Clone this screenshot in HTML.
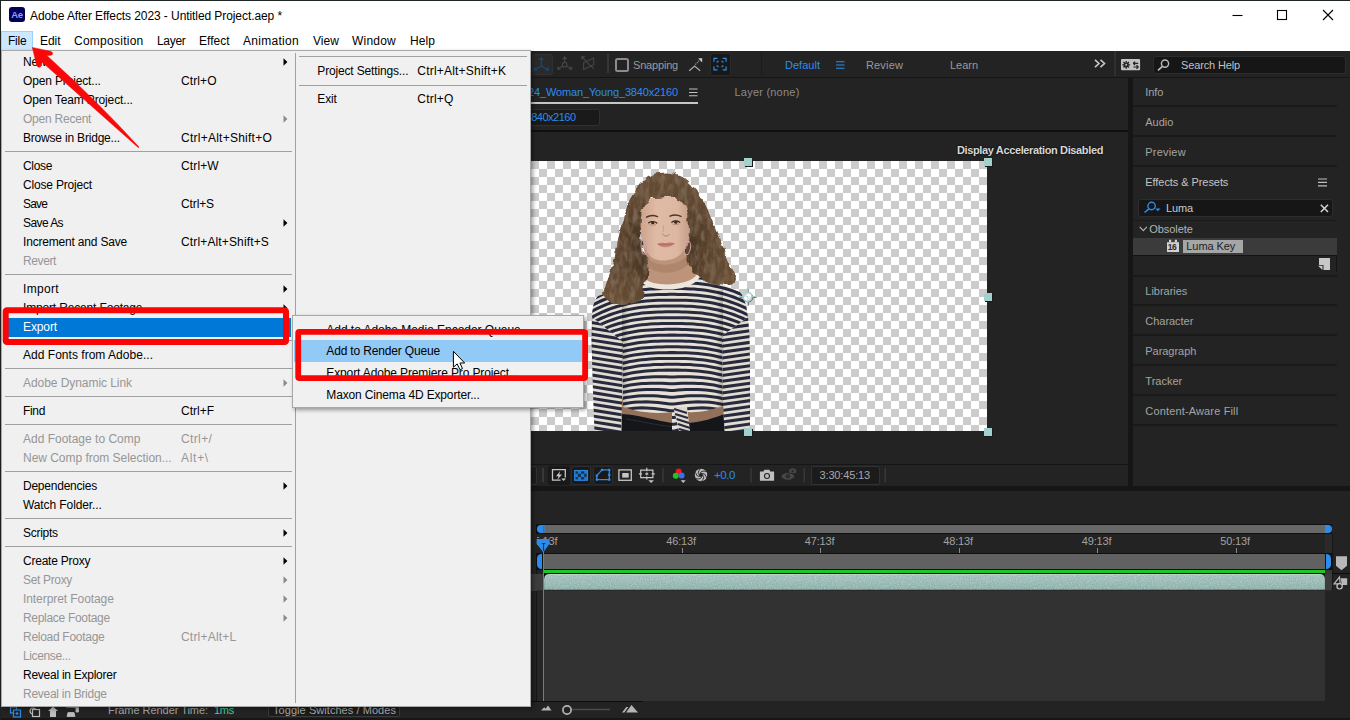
<!DOCTYPE html>
<html lang="en"><head><meta charset="utf-8"><title>Adobe After Effects 2023 - Untitled Project.aep *</title>
<style>
html,body{margin:0;padding:0;}
body{width:1350px;height:720px;overflow:hidden;position:relative;background:#232323;font-family:"Liberation Sans",sans-serif;}
.t{position:absolute;white-space:nowrap;display:block;}
.r{position:absolute;box-sizing:border-box;}
svg{position:absolute;overflow:visible;}
</style></head>
<body>
<!-- 10_app.py -->
<div class="r" style="left:0px;top:51px;width:1350px;height:669px;background:#161616;"></div>
<div class="r" style="left:0px;top:51px;width:1350px;height:25.5px;background:#232323;"></div>
<div class="r" style="left:300px;top:78px;width:827.5px;height:408px;background:#232323;"></div>
<div class="r" style="left:1132.5px;top:78px;width:217.5px;height:408px;background:#232323;"></div>
<div class="r" style="left:0px;top:491px;width:1350px;height:227px;background:#232323;"></div>
<div class="r" style="left:532.4px;top:54.4px;width:20.2px;height:20.2px;background:#2a2a2a;border-radius:2.5px;border:1px solid #313131;"></div>
<svg style="left:530px;top:52px" width="70" height="24" viewBox="0 0 70 24">
<g stroke="#1b4872" stroke-width="1.2" fill="#1b4872" stroke-linejoin="round">
<path d="M11.4 13.9V7.5M11.4 13.9L5.6 17.4M11.4 13.9L17.2 17.4" fill="none"/>
<path d="M11.4 5.1L13.6 7.7H9.2ZM4.2 18.5L4.7 15.3L7.1 18.2ZM18.6 18.5L18.1 15.3L15.7 18.2Z" stroke-width=".6"/></g>
<g stroke="#464646" stroke-width="1.1" fill="#464646" stroke-linejoin="round">
<path d="M34.7 10.2V6.6M32.8 14L28.8 16.5M36.6 14L40.6 16.5" fill="none"/><circle cx="34.7" cy="12.7" r="2.3" fill="none"/>
<path d="M34.7 4.3L36.9 6.9H32.5ZM27.4 17.6L27.9 14.5L30.3 17.3ZM42 17.6L41.5 14.5L39.1 17.3Z" stroke-width=".6"/>
<path d="M53.6 10.7L63.7 5.9V12.7L53.6 17.5Z" fill="none"/><path d="M59.2 12.4L53 5.8M59.2 12.4L63.7 16.6" fill="none"/>
<path d="M51.5 4.3L55 4.6L51.9 7.6Z" stroke-width=".6"/></g>
</svg>
<div class="r" style="left:607.2px;top:54.4px;width:1.7px;height:18.4px;background:#363636;"></div>
<div class="r" style="left:615px;top:58px;width:13.5px;height:13.5px;background:transparent;border:2px solid #8c8c8c;border-radius:2.5px;"></div>
<span class="t" style="left:633.00px;top:55.00px;height:20px;line-height:20px;font-size:11px;color:#9a9a9a;letter-spacing:-0.185px;">Snapping</span>
<svg style="left:688px;top:56px" width="18" height="18" viewBox="0 0 18 18">
<path d="M1.2 14.8L6.6 10L12.1 14.8" fill="none" stroke="#a8a8a8" stroke-width="1.3"/>
<path d="M7.3 8.6L11.2 4.7" stroke="#9a9a9a" stroke-width="1.1" stroke-dasharray="1.3 .9"/>
<path d="M10.1 2.3H14.2V6.4Z" fill="#cdcdcd"/></svg>
<div class="r" style="left:710.2px;top:53.4px;width:21px;height:22.2px;background:#181818;border-radius:3px;border:1px solid #2a2a2a;"></div>
<svg style="left:712px;top:56px" width="18" height="16" viewBox="0 0 18 16">
<g fill="none" stroke="#2d8ceb" stroke-width="1.2">
<path d="M2 5.7V2.3H5.4M10.7 2.3H14.1V5.7M14.1 10.4V13.8H10.7M5.4 13.8H2V10.4"/>
<path d="M5.2 6.9V5.3H6.8M9.3 5.3H10.9V6.9M10.9 9.1V10.7H9.3M6.8 10.7H5.2V9.1" stroke-width="1"/></g></svg>
<div class="r" style="left:761px;top:51px;width:1px;height:25px;background:#1c1c1c;"></div>
<span class="t" style="left:785.00px;top:55.00px;height:20px;line-height:20px;font-size:11px;color:#2d8ceb;letter-spacing:0.021px;">Default</span>
<svg style="left:836px;top:61px" width="9" height="8" viewBox="0 0 9 8"><path d="M0 .8H8.5M0 4H8.5M0 7.2H8.5" stroke="#2d8ceb" stroke-width="1.05"/></svg>
<span class="t" style="left:866.00px;top:55.00px;height:20px;line-height:20px;font-size:11px;color:#9a9a9a;letter-spacing:0.156px;">Review</span>
<span class="t" style="left:950.00px;top:55.00px;height:20px;line-height:20px;font-size:11px;color:#9a9a9a;letter-spacing:-0.026px;">Learn</span>
<svg style="left:1094px;top:59px" width="12" height="9" viewBox="0 0 12 9"><path d="M1 .8L5 4.5L1 8.2M6.5 .8L10.5 4.5L6.5 8.2" fill="none" stroke="#c8c8c8" stroke-width="1.6"/></svg>
<div class="r" style="left:1114.4px;top:51px;width:1.6px;height:24.8px;background:#303030;"></div>
<svg style="left:1120.9px;top:58.8px" width="20" height="12" viewBox="0 0 20 12">
<rect x="0" y="0" width="19.1" height="11.3" rx="1" fill="#c2c2c2"/>
<path d="M7.40 5.80L9.10 5.80M6.76 7.36L7.96 8.56M5.20 8.00L5.20 9.70M3.64 7.36L2.44 8.56M3.00 5.80L1.30 5.80M3.64 4.24L2.44 3.04M5.20 3.60L5.20 1.90M6.76 4.24L7.96 3.04" stroke="#232323" stroke-width="1.3"/>
<circle cx="5.2" cy="5.8" r="2.6" fill="#232323"/><circle cx="5.2" cy="5.8" r="1" fill="#c2c2c2"/>
<path d="M12.4 4.3H17.2M12.2 4.3L14.1 2.6M12.2 4.3L14.1 6M12.4 8H17.2M17.4 8L15.5 6.3M17.4 8L15.5 9.7" stroke="#232323" stroke-width="1.2" fill="none"/></svg>
<div class="r" style="left:1152.5px;top:55.5px;width:193px;height:18px;background:#161616;border-radius:3px;border:1px solid #2c2c2c;"></div>
<svg style="left:1157px;top:59px" width="14" height="12" viewBox="0 0 14 12"><circle cx="8" cy="4.6" r="3.6" fill="none" stroke="#b9b9b9" stroke-width="1.4"/><path d="M5.4 7.4L1 11.3" stroke="#b9b9b9" stroke-width="1.8"/></svg>
<span class="t" style="left:1181.00px;top:55.00px;height:20px;line-height:20px;font-size:11px;color:#c0c0c0;letter-spacing:-0.139px;">Search Help</span>
<!-- 20_comp.py -->
<span class="t" style="right:672.00px;top:81.70px;height:20px;line-height:20px;font-size:11px;color:#2d8ceb;letter-spacing:-0.150px;">Composition 24_Woman_Young_3840x2160</span>
<svg style="left:689px;top:88px" width="9" height="9" viewBox="0 0 9 9"><path d="M0 1H8.5M0 4.4H8.5M0 7.8H8.5" stroke="#c0c0c0" stroke-width="1.05"/></svg>
<div class="r" style="left:300px;top:102px;width:397.5px;height:2px;background:#c6c6c6;"></div>
<span class="t" style="left:734.50px;top:81.70px;height:20px;line-height:20px;font-size:11px;color:#8a8a8a;letter-spacing:0.220px;">Layer (none)</span>
<div class="r" style="left:300px;top:109px;width:299.5px;height:16.5px;background:#1a1a1a;border:1px solid #2f2f2f;border-radius:2px;"></div>
<span class="t" style="right:774.50px;top:107.00px;height:20px;line-height:20px;font-size:11px;color:#2d8ceb;letter-spacing:-0.500px;">24_Woman_Young_3840x2160</span>
<div class="r" style="left:300px;top:130px;width:827.5px;height:1.5px;background:#101010;"></div>
<span class="t" style="left:957.00px;top:139.50px;height:20px;line-height:20px;font-size:11px;color:#d6d6d6;letter-spacing:-0.369px;font-weight:bold;text-shadow:0 0 2px #000;">Display Acceleration Disabled</span>
<div class="r" style="left:507px;top:161px;width:480px;height:270px;background-color:#fff;background-image:conic-gradient(#ccc 0 25%,#fff 0 50%,#ccc 0 75%,#fff 0);background-size:16px 16px;background-position:0 0;"></div>
<!-- 25_woman.py -->
<svg style="left:0;top:0" width="1350" height="720" viewBox="0 0 1350 720">
<defs>
<clipPath id="cv"><rect x="507" y="161" width="480" height="270"/></clipPath>
<clipPath id="torso"><path d="M643 281C650 290 690 290 699 277L722 284L740 292C745 298 747 308 748 318L722 336L723 406C712 410 698 413 688 412L688 431L672 431L672 412C656 414 640 413 623 407L622 342L592 318C592 308 594 300 598 296Z"/></clipPath>
<clipPath id="slL"><path d="M592 317L623 342L622 404L621 431L594.4 431L593 391L591.5 340Z"/></clipPath>
<clipPath id="slR"><path d="M748 317L722 336L723 404L724.5 431L750 431L750 369L749.5 335Z"/></clipPath>
<radialGradient id="hg" gradientUnits="userSpaceOnUse" cx="664" cy="245" r="82"><stop offset="0" stop-color="#35261a"/><stop offset="0.33" stop-color="#4a3625"/><stop offset="0.62" stop-color="#5f4630"/><stop offset="1" stop-color="#6c5138"/></radialGradient>
<linearGradient id="fg" x1="0" x2="1"><stop offset="0" stop-color="#c9a089"/><stop offset="0.35" stop-color="#dfbaa5"/><stop offset="0.75" stop-color="#ddb7a2"/><stop offset="1" stop-color="#c59c85"/></linearGradient>
<linearGradient id="shade" x1="0" x2="1"><stop offset="0" stop-color="#000" stop-opacity=".22"/><stop offset=".07" stop-color="#000" stop-opacity="0"/><stop offset=".93" stop-color="#000" stop-opacity="0"/><stop offset="1" stop-color="#000" stop-opacity=".22"/></linearGradient>
<filter id="curl" x="-10%" y="-10%" width="120%" height="120%"><feTurbulence type="fractalNoise" baseFrequency="0.11" numOctaves="2" seed="4" result="n"/><feDisplacementMap in="SourceGraphic" in2="n" scale="6" xChannelSelector="R" yChannelSelector="G"/></filter>
<filter id="tex" x="-5%" y="-5%" width="110%" height="110%"><feTurbulence type="fractalNoise" baseFrequency="0.11" numOctaves="2" seed="4" result="n"/><feDisplacementMap in="SourceGraphic" in2="n" scale="6" xChannelSelector="R" yChannelSelector="G" result="d"/><feTurbulence type="fractalNoise" baseFrequency="0.2 0.08" numOctaves="3" seed="9" result="m"/><feColorMatrix in="m" type="matrix" values="0 0 0 0 0.58  0 0 0 0 0.44  0 0 0 0 0.29  2.4 1.6 0 0 -1.85" result="c"/><feComposite in="c" in2="d" operator="in"/></filter>
<filter id="texd" x="-5%" y="-5%" width="110%" height="110%"><feTurbulence type="fractalNoise" baseFrequency="0.11" numOctaves="2" seed="4" result="n"/><feDisplacementMap in="SourceGraphic" in2="n" scale="6" xChannelSelector="R" yChannelSelector="G" result="d"/><feTurbulence type="fractalNoise" baseFrequency="0.18 0.08" numOctaves="3" seed="31" result="m"/><feColorMatrix in="m" type="matrix" values="0 0 0 0 0.2  0 0 0 0 0.14  0 0 0 0 0.09  2.4 1.6 0 0 -1.9" result="c"/><feComposite in="c" in2="d" operator="in"/></filter>
</defs>
<g clip-path="url(#cv)">
<!-- skin: neck + face -->
<path d="M636 200L694 200L694 262L704 284L690 296L650 296L640 286L646 262Z" fill="#bd947a"/>
<path d="M646 256C654 268 678 268 688 254L690 262C680 276 654 276 646 264Z" fill="#9d775e" opacity=".5"/>
<path d="M638 216C638 204 648 196 662 196C676 195.5 689 203 690 218C691 230 689 242 682.5 252C676 262 656 263 650 256C643 248 639 232 638 216Z" fill="url(#fg)"/>
<!-- brows, eyes, nose, mouth -->
<path d="M646.5 217.2C649.5 215.4 654 215.2 657.5 216.6M670 216.2C673 214.8 677.5 214.6 681 216.4" stroke="#4a3627" stroke-width="1.4" fill="none" stroke-linecap="round"/>
<path d="M648.8 222.8C651 221.2 654.5 221.2 656.8 223M671.8 222.2C674 220.8 677.5 220.8 679.8 222.2" stroke="#2e211a" stroke-width="1.3" fill="none" stroke-linecap="round"/><ellipse cx="652.8" cy="223" rx="1.7" ry="1.3" fill="#3a2a20"/><ellipse cx="675.8" cy="222.4" rx="1.7" ry="1.3" fill="#3a2a20"/>
<path d="M649.5 224.6C651.5 225.4 654 225.4 656 224.6M672.5 224C674.5 224.8 677 224.8 679 224" stroke="#a8826e" stroke-width=".8" fill="none"/>
<path d="M662.6 233.5C663.4 236.6 668 236.8 669.2 234.2" stroke="#b08068" stroke-width="1" fill="none"/>
<path d="M663.8 225L662.8 232" stroke="#c69c86" stroke-width=".9" fill="none"/>
<path d="M657.5 244C661 242 664 242.8 666 243.1C668 242.7 671 242 674.5 243.6C671 248.2 661 248.4 657.5 244Z" fill="#c77f76"/>
<path d="M657.5 244C662 244.7 670 244.7 674.5 243.6" stroke="#a05e58" stroke-width=".6" fill="none"/>
<!-- belly & trousers -->
<rect x="621.5" y="408" width="103.5" height="23" fill="#15161a"/>
<path d="M622 398L724 398L724.5 414C714 418 702 422 688 423L672 423C658 421 640 415 621.5 414Z" fill="#93705a"/>
<path d="M626 419C640 421 660 426 672 426.5" stroke="#2c2d33" stroke-width="1" fill="none"/>
<!-- shirt base -->
<g clip-path="url(#torso)"><rect x="586" y="270" width="172" height="165" fill="#e7e1d7"/>
<polyline points="586,279.9 590,277.5 594,275.3 598,273.2 602,271.4 606,269.7 610,268.1 614,266.7 618,265.5 622,264.4 626,263.4 630,262.5 634,261.8 638,261.2 642,260.7 646,260.3 650,259.9 654,259.7 658,259.5 662,259.4 666,259.4 670,259.4 674,259.4 678,259.4 682,259.4 686,259.5 690,259.7 694,259.9 698,260.3 702,260.7 706,261.2 710,261.8 714,262.5 718,263.4 722,264.4 726,265.5 730,266.7 734,268.1 738,269.7 742,271.4 746,273.2 750,275.3 754,277.5" fill="none" stroke="#272a3c" stroke-width="3.05"/>
<polyline points="586,285.7 590,283.3 594,281.1 598,279.1 602,277.2 606,275.5 610,273.9 614,272.5 618,271.3 622,270.2 626,269.2 630,268.4 634,267.6 638,267.0 642,266.5 646,266.1 650,265.8 654,265.5 658,265.4 662,265.3 666,265.2 670,265.2 674,265.2 678,265.2 682,265.3 686,265.4 690,265.5 694,265.8 698,266.1 702,266.5 706,267.0 710,267.6 714,268.4 718,269.2 722,270.2 726,271.3 730,272.5 734,273.9 738,275.5 742,277.2 746,279.1 750,281.1 754,283.3" fill="none" stroke="#272a3c" stroke-width="3.05"/>
<polyline points="586,291.5 590,289.1 594,286.9 598,284.9 602,283.0 606,281.3 610,279.8 614,278.4 618,277.1 622,276.0 626,275.0 630,274.2 634,273.5 638,272.8 642,272.3 646,271.9 650,271.6 654,271.4 658,271.2 662,271.1 666,271.0 670,271.0 674,271.0 678,271.0 682,271.1 686,271.2 690,271.4 694,271.6 698,271.9 702,272.3 706,272.8 710,273.5 714,274.2 718,275.0 722,276.0 726,277.1 730,278.4 734,279.8 738,281.3 742,283.0 746,284.9 750,286.9 754,289.1" fill="none" stroke="#272a3c" stroke-width="3.05"/>
<polyline points="586,297.4 590,295.0 594,292.8 598,290.7 602,288.9 606,287.1 610,285.6 614,284.2 618,283.0 622,281.8 626,280.9 630,280.0 634,279.3 638,278.7 642,278.2 646,277.8 650,277.4 654,277.2 658,277.0 662,276.9 666,276.9 670,276.8 674,276.8 678,276.9 682,276.9 686,277.0 690,277.2 694,277.4 698,277.8 702,278.2 706,278.7 710,279.3 714,280.0 718,280.9 722,281.8 726,283.0 730,284.2 734,285.6 738,287.1 742,288.9 746,290.7 750,292.8 754,295.0" fill="none" stroke="#272a3c" stroke-width="3.05"/>
<polyline points="586,303.2 590,300.8 594,298.6 598,296.6 602,294.7 606,293.0 610,291.4 614,290.0 618,288.8 622,287.7 626,286.7 630,285.9 634,285.1 638,284.5 642,284.0 646,283.6 650,283.3 654,283.0 658,282.9 662,282.7 666,282.7 670,282.7 674,282.7 678,282.7 682,282.7 686,282.9 690,283.0 694,283.3 698,283.6 702,284.0 706,284.5 710,285.1 714,285.9 718,286.7 722,287.7 726,288.8 730,290.0 734,291.4 738,293.0 742,294.7 746,296.6 750,298.6 754,300.8" fill="none" stroke="#272a3c" stroke-width="3.05"/>
<polyline points="586,309.0 590,306.6 594,304.4 598,302.4 602,300.5 606,298.8 610,297.3 614,295.9 618,294.6 622,293.5 626,292.5 630,291.7 634,291.0 638,290.3 642,289.8 646,289.4 650,289.1 654,288.9 658,288.7 662,288.6 666,288.5 670,288.5 674,288.5 678,288.5 682,288.6 686,288.7 690,288.9 694,289.1 698,289.4 702,289.8 706,290.3 710,291.0 714,291.7 718,292.5 722,293.5 726,294.6 730,295.9 734,297.3 738,298.8 742,300.5 746,302.4 750,304.4 754,306.6" fill="none" stroke="#272a3c" stroke-width="3.05"/>
<polyline points="586,314.8 590,312.5 594,310.2 598,308.2 602,306.3 606,304.6 610,303.1 614,301.7 618,300.4 622,299.3 626,298.4 630,297.5 634,296.8 638,296.2 642,295.7 646,295.2 650,294.9 654,294.7 658,294.5 662,294.4 666,294.4 670,294.3 674,294.3 678,294.4 682,294.4 686,294.5 690,294.7 694,294.9 698,295.2 702,295.7 706,296.2 710,296.8 714,297.5 718,298.4 722,299.3 726,300.4 730,301.7 734,303.1 738,304.6 742,306.3 746,308.2 750,310.2 754,312.5" fill="none" stroke="#272a3c" stroke-width="3.05"/>
<polyline points="586,320.7 590,318.3 594,316.1 598,314.0 602,312.2 606,310.5 610,308.9 614,307.5 618,306.3 622,305.2 626,304.2 630,303.3 634,302.6 638,302.0 642,301.5 646,301.1 650,300.8 654,300.5 658,300.3 662,300.2 666,300.2 670,300.2 674,300.2 678,300.2 682,300.2 686,300.3 690,300.5 694,300.8 698,301.1 702,301.5 706,302.0 710,302.6 714,303.3 718,304.2 722,305.2 726,306.3 730,307.5 734,308.9 738,310.5 742,312.2 746,314.0 750,316.1 754,318.3" fill="none" stroke="#272a3c" stroke-width="3.05"/>
<polyline points="586,326.5 590,324.1 594,321.9 598,319.9 602,318.0 606,316.3 610,314.8 614,313.4 618,312.1 622,311.0 626,310.0 630,309.2 634,308.4 638,307.8 642,307.3 646,306.9 650,306.6 654,306.3 658,306.2 662,306.1 666,306.0 670,306.0 674,306.0 678,306.0 682,306.1 686,306.2 690,306.3 694,306.6 698,306.9 702,307.3 706,307.8 710,308.4 714,309.2 718,310.0 722,311.0 726,312.1 730,313.4 734,314.8 738,316.3 742,318.0 746,319.9 750,321.9 754,324.1" fill="none" stroke="#272a3c" stroke-width="3.05"/>
<polyline points="586,332.3 590,329.9 594,327.7 598,325.7 602,323.8 606,322.1 610,320.6 614,319.2 618,317.9 622,316.8 626,315.9 630,315.0 634,314.3 638,313.7 642,313.1 646,312.7 650,312.4 654,312.2 658,312.0 662,311.9 666,311.8 670,311.8 674,311.8 678,311.8 682,311.9 686,312.0 690,312.2 694,312.4 698,312.7 702,313.1 706,313.7 710,314.3 714,315.0 718,315.9 722,316.8 726,317.9 730,319.2 734,320.6 738,322.1 742,323.8 746,325.7 750,327.7 754,329.9" fill="none" stroke="#272a3c" stroke-width="3.05"/>
<polyline points="586,338.2 590,335.8 594,333.6 598,331.5 602,329.7 606,328.0 610,326.4 614,325.0 618,323.8 622,322.7 626,321.7 630,320.8 634,320.1 638,319.5 642,319.0 646,318.6 650,318.2 654,318.0 658,317.8 662,317.7 666,317.7 670,317.7 674,317.7 678,317.7 682,317.7 686,317.8 690,318.0 694,318.2 698,318.6 702,319.0 706,319.5 710,320.1 714,320.8 718,321.7 722,322.7 726,323.8 730,325.0 734,326.4 738,328.0 742,329.7 746,331.5 750,333.6 754,335.8" fill="none" stroke="#272a3c" stroke-width="3.05"/>
<polyline points="586,344.0 590,341.6 594,339.4 598,337.4 602,335.5 606,333.8 610,332.2 614,330.8 618,329.6 622,328.5 626,327.5 630,326.7 634,325.9 638,325.3 642,324.8 646,324.4 650,324.1 654,323.8 658,323.7 662,323.6 666,323.5 670,323.5 674,323.5 678,323.5 682,323.6 686,323.7 690,323.8 694,324.1 698,324.4 702,324.8 706,325.3 710,325.9 714,326.7 718,327.5 722,328.5 726,329.6 730,330.8 734,332.2 738,333.8 742,335.5 746,337.4 750,339.4 754,341.6" fill="none" stroke="#272a3c" stroke-width="3.05"/>
<polyline points="586,349.8 590,347.4 594,345.2 598,343.2 602,341.3 606,339.6 610,338.1 614,336.7 618,335.4 622,334.3 626,333.3 630,332.5 634,331.8 638,331.1 642,330.6 646,330.2 650,329.9 654,329.7 658,329.5 662,329.4 666,329.3 670,329.3 674,329.3 678,329.3 682,329.4 686,329.5 690,329.7 694,329.9 698,330.2 702,330.6 706,331.1 710,331.8 714,332.5 718,333.3 722,334.3 726,335.4 730,336.7 734,338.1 738,339.6 742,341.3 746,343.2 750,345.2 754,347.4" fill="none" stroke="#272a3c" stroke-width="3.05"/>
<polyline points="586,355.7 590,353.3 594,351.1 598,349.0 602,347.2 606,345.4 610,343.9 614,342.5 618,341.3 622,340.1 626,339.2 630,338.3 634,337.6 638,337.0 642,336.5 646,336.1 650,335.7 654,335.5 658,335.3 662,335.2 666,335.2 670,335.1 674,335.1 678,335.2 682,335.2 686,335.3 690,335.5 694,335.7 698,336.1 702,336.5 706,337.0 710,337.6 714,338.3 718,339.2 722,340.1 726,341.3 730,342.5 734,343.9 738,345.4 742,347.2 746,349.0 750,351.1 754,353.3" fill="none" stroke="#272a3c" stroke-width="3.05"/>
<polyline points="586,361.5 590,359.1 594,356.9 598,354.9 602,353.0 606,351.3 610,349.7 614,348.3 618,347.1 622,346.0 626,345.0 630,344.2 634,343.4 638,342.8 642,342.3 646,341.9 650,341.6 654,341.3 658,341.2 662,341.0 666,341.0 670,341.0 674,341.0 678,341.0 682,341.0 686,341.2 690,341.3 694,341.6 698,341.9 702,342.3 706,342.8 710,343.4 714,344.2 718,345.0 722,346.0 726,347.1 730,348.3 734,349.7 738,351.3 742,353.0 746,354.9 750,356.9 754,359.1" fill="none" stroke="#272a3c" stroke-width="3.05"/>
<polyline points="586,367.3 590,364.9 594,362.7 598,360.7 602,358.8 606,357.1 610,355.6 614,354.2 618,352.9 622,351.8 626,350.8 630,350.0 634,349.3 638,348.6 642,348.1 646,347.7 650,347.4 654,347.2 658,347.0 662,346.9 666,346.8 670,346.8 674,346.8 678,346.8 682,346.9 686,347.0 690,347.2 694,347.4 698,347.7 702,348.1 706,348.6 710,349.3 714,350.0 718,350.8 722,351.8 726,352.9 730,354.2 734,355.6 738,357.1 742,358.8 746,360.7 750,362.7 754,364.9" fill="none" stroke="#272a3c" stroke-width="3.05"/>
<polyline points="586,373.1 590,370.8 594,368.5 598,366.5 602,364.6 606,362.9 610,361.4 614,360.0 618,358.7 622,357.6 626,356.7 630,355.8 634,355.1 638,354.5 642,354.0 646,353.5 650,353.2 654,353.0 658,352.8 662,352.7 666,352.7 670,352.6 674,352.6 678,352.7 682,352.7 686,352.8 690,353.0 694,353.2 698,353.5 702,354.0 706,354.5 710,355.1 714,355.8 718,356.7 722,357.6 726,358.7 730,360.0 734,361.4 738,362.9 742,364.6 746,366.5 750,368.5 754,370.8" fill="none" stroke="#272a3c" stroke-width="3.05"/>
<polyline points="586,379.0 590,376.6 594,374.4 598,372.3 602,370.5 606,368.8 610,367.2 614,365.8 618,364.6 622,363.5 626,362.5 630,361.6 634,360.9 638,360.3 642,359.8 646,359.4 650,359.1 654,358.8 658,358.6 662,358.5 666,358.5 670,358.5 674,358.5 678,358.5 682,358.5 686,358.6 690,358.8 694,359.1 698,359.4 702,359.8 706,360.3 710,360.9 714,361.6 718,362.5 722,363.5 726,364.6 730,365.8 734,367.2 738,368.8 742,370.5 746,372.3 750,374.4 754,376.6" fill="none" stroke="#272a3c" stroke-width="3.05"/>
<polyline points="586,384.8 590,382.4 594,380.2 598,378.2 602,376.3 606,374.6 610,373.1 614,371.7 618,370.4 622,369.3 626,368.3 630,367.5 634,366.7 638,366.1 642,365.6 646,365.2 650,364.9 654,364.6 658,364.5 662,364.4 666,364.3 670,364.3 674,364.3 678,364.3 682,364.4 686,364.5 690,364.6 694,364.9 698,365.2 702,365.6 706,366.1 710,366.7 714,367.5 718,368.3 722,369.3 726,370.4 730,371.7 734,373.1 738,374.6 742,376.3 746,378.2 750,380.2 754,382.4" fill="none" stroke="#272a3c" stroke-width="3.05"/>
<polyline points="586,390.6 590,388.2 594,386.0 598,384.0 602,382.1 606,380.4 610,378.9 614,377.5 618,376.2 622,375.1 626,374.2 630,373.3 634,372.6 638,372.0 642,371.4 646,371.0 650,370.7 654,370.5 658,370.3 662,370.2 666,370.1 670,370.1 674,370.1 678,370.1 682,370.2 686,370.3 690,370.5 694,370.7 698,371.0 702,371.4 706,372.0 710,372.6 714,373.3 718,374.2 722,375.1 726,376.2 730,377.5 734,378.9 738,380.4 742,382.1 746,384.0 750,386.0 754,388.2" fill="none" stroke="#272a3c" stroke-width="3.05"/>
<polyline points="586,396.5 590,394.1 594,391.9 598,389.8 602,388.0 606,386.3 610,384.7 614,383.3 618,382.1 622,381.0 626,380.0 630,379.2 634,378.5 638,378.0 642,377.5 646,377.2 650,377.0 654,376.8 658,376.7 662,376.7 666,376.8 670,376.9 674,376.9 678,376.8 682,376.7 686,376.7 690,376.8 694,377.0 698,377.2 702,377.5 706,378.0 710,378.5 714,379.2 718,380.0 722,381.0 726,382.1 730,383.3 734,384.7 738,386.3 742,388.0 746,389.8 750,391.9 754,394.1" fill="none" stroke="#272a3c" stroke-width="3.05"/>
<polyline points="586,402.3 590,399.9 594,397.7 598,395.7 602,393.8 606,392.1 610,390.5 614,389.1 618,387.9 622,386.8 626,385.9 630,385.1 634,384.5 638,384.0 642,383.6 646,383.4 650,383.2 654,383.2 658,383.2 662,383.3 666,383.5 670,383.7 674,383.7 678,383.5 682,383.3 686,383.2 690,383.2 694,383.2 698,383.4 702,383.6 706,384.0 710,384.5 714,385.1 718,385.9 722,386.8 726,387.9 730,389.1 734,390.5 738,392.1 742,393.8 746,395.7 750,397.7 754,399.9" fill="none" stroke="#272a3c" stroke-width="3.05"/>
<polyline points="586,408.1 590,405.7 594,403.5 598,401.5 602,399.6 606,397.9 610,396.4 614,395.0 618,393.7 622,392.6 626,391.7 630,391.0 634,390.4 638,390.0 642,389.7 646,389.5 650,389.5 654,389.5 658,389.6 662,389.8 666,390.1 670,390.4 674,390.4 678,390.1 682,389.8 686,389.6 690,389.5 694,389.5 698,389.5 702,389.7 706,390.0 710,390.4 714,391.0 718,391.7 722,392.6 726,393.7 730,395.0 734,396.4 738,397.9 742,399.6 746,401.5 750,403.5 754,405.7" fill="none" stroke="#272a3c" stroke-width="3.05"/>
<polyline points="586,414.0 590,411.6 594,409.4 598,407.3 602,405.5 606,403.7 610,402.2 614,400.8 618,399.6 622,398.4 626,397.6 630,396.9 634,396.4 638,396.0 642,395.8 646,395.7 650,395.7 654,395.8 658,396.1 662,396.4 666,396.8 670,397.2 674,397.2 678,396.8 682,396.4 686,396.1 690,395.8 694,395.7 698,395.7 702,395.8 706,396.0 710,396.4 714,396.9 718,397.6 722,398.4 726,399.6 730,400.8 734,402.2 738,403.7 742,405.5 746,407.3 750,409.4 754,411.6" fill="none" stroke="#272a3c" stroke-width="3.05"/>
<polyline points="586,419.8 590,417.4 594,415.2 598,413.2 602,411.3 606,409.6 610,408.0 614,406.6 618,405.4 622,404.3 626,403.4 630,402.8 634,402.3 638,402.0 642,401.9 646,401.8 650,402.0 654,402.2 658,402.5 662,402.9 666,403.4 670,404.0 674,404.0 678,403.4 682,402.9 686,402.5 690,402.2 694,402.0 698,401.8 702,401.9 706,402.0 710,402.3 714,402.8 718,403.4 722,404.3 726,405.4 730,406.6 734,408.0 738,409.6 742,411.3 746,413.2 750,415.2 754,417.4" fill="none" stroke="#272a3c" stroke-width="3.05"/>
<polyline points="586,425.6 590,423.2 594,421.0 598,419.0 602,417.1 606,415.4 610,413.9 614,412.5 618,411.2 622,410.1 626,409.3 630,408.7 634,408.3 638,408.0 642,407.9 646,408.0 650,408.2 654,408.5 658,408.9 662,409.5 666,410.1 670,410.7 674,410.7 678,410.1 682,409.5 686,408.9 690,408.5 694,408.2 698,408.0 702,407.9 706,408.0 710,408.3 714,408.7 718,409.3 722,410.1 726,411.2 730,412.5 734,413.9 738,415.4 742,417.1 746,419.0 750,421.0 754,423.2" fill="none" stroke="#272a3c" stroke-width="3.05"/>
<polyline points="586,431.4 590,429.1 594,426.8 598,424.8 602,422.9 606,421.2 610,419.7 614,418.3 618,417.0 622,415.9 626,415.1 630,414.6 634,414.2 638,414.0 642,414.0 646,414.2 650,414.5 654,414.9 658,415.4 662,416.0 666,416.7 670,417.5 674,417.5 678,416.7 682,416.0 686,415.4 690,414.9 694,414.5 698,414.2 702,414.0 706,414.0 710,414.2 714,414.6 718,415.1 722,415.9 726,417.0 730,418.3 734,419.7 738,421.2 742,422.9 746,424.8 750,426.8 754,429.1" fill="none" stroke="#272a3c" stroke-width="3.05"/>
<polyline points="586,437.3 590,434.9 594,432.7 598,430.6 602,428.8 606,427.1 610,425.5 614,424.1 618,422.9 622,421.8 626,421.0 630,420.5 634,420.2 638,420.0 642,420.1 646,420.3 650,420.7 654,421.2 658,421.8 662,422.6 666,423.4 670,424.3 674,424.3 678,423.4 682,422.6 686,421.8 690,421.2 694,420.7 698,420.3 702,420.1 706,420.0 710,420.2 714,420.5 718,421.0 722,421.8 726,422.9 730,424.1 734,425.5 738,427.1 742,428.8 746,430.6 750,432.7 754,434.9" fill="none" stroke="#272a3c" stroke-width="3.05"/>
<polyline points="586,443.1 590,440.7 594,438.5 598,436.5 602,434.6 606,432.9 610,431.4 614,430.0 618,428.7 622,427.6 626,426.8 630,426.3 634,426.1 638,426.1 642,426.2 646,426.5 650,427.0 654,427.5 658,428.3 662,429.1 666,430.0 670,431.1 674,431.1 678,430.0 682,429.1 686,428.3 690,427.5 694,427.0 698,426.5 702,426.2 706,426.1 710,426.1 714,426.3 718,426.8 722,427.6 726,428.7 730,430.0 734,431.4 738,432.9 742,434.6 746,436.5 750,438.5 754,440.7" fill="none" stroke="#272a3c" stroke-width="3.05"/>
<polyline points="586,448.9 590,446.5 594,444.3 598,442.3 602,440.4 606,438.7 610,437.2 614,435.8 618,434.5 622,433.4 626,432.7 630,432.2 634,432.0 638,432.1 642,432.3 646,432.7 650,433.2 654,433.9 658,434.7 662,435.7 666,436.7 670,437.8 674,437.8 678,436.7 682,435.7 686,434.7 690,433.9 694,433.2 698,432.7 702,432.3 706,432.1 710,432.0 714,432.2 718,432.7 722,433.4 726,434.5 730,435.8 734,437.2 738,438.7 742,440.4 746,442.3 750,444.3 754,446.5" fill="none" stroke="#272a3c" stroke-width="3.05"/>
<polyline points="586,454.8 590,452.4 594,450.2 598,448.1 602,446.3 606,444.6 610,443.0 614,441.6 618,440.4 622,439.3 626,438.5 630,438.1 634,438.0 638,438.1 642,438.4 646,438.8 650,439.5 654,440.2 658,441.2 662,442.2 666,443.4 670,444.6 674,444.6 678,443.4 682,442.2 686,441.2 690,440.2 694,439.5 698,438.8 702,438.4 706,438.1 710,438.0 714,438.1 718,438.5 722,439.3 726,440.4 730,441.6 734,443.0 738,444.6 742,446.3 746,448.1 750,450.2 754,452.4" fill="none" stroke="#272a3c" stroke-width="3.05"/>
<rect x="622" y="290" width="101" height="125" fill="url(#shade)"/>
</g>
<g clip-path="url(#slL)"><rect x="586" y="310" width="40" height="125" fill="#e2dcd3"/>
<path d="M588 316.1L626 322.2" stroke="#272a3c" stroke-width="3.05"/>
<path d="M588 322.0L626 328.0" stroke="#272a3c" stroke-width="3.05"/>
<path d="M588 327.8L626 333.8" stroke="#272a3c" stroke-width="3.05"/>
<path d="M588 333.6L626 339.7" stroke="#272a3c" stroke-width="3.05"/>
<path d="M588 339.5L626 345.5" stroke="#272a3c" stroke-width="3.05"/>
<path d="M588 345.3L626 351.3" stroke="#272a3c" stroke-width="3.05"/>
<path d="M588 351.1L626 357.1" stroke="#272a3c" stroke-width="3.05"/>
<path d="M588 357.0L626 363.0" stroke="#272a3c" stroke-width="3.05"/>
<path d="M588 362.8L626 368.8" stroke="#272a3c" stroke-width="3.05"/>
<path d="M588 368.6L626 374.6" stroke="#272a3c" stroke-width="3.05"/>
<path d="M588 374.4L626 380.5" stroke="#272a3c" stroke-width="3.05"/>
<path d="M588 380.3L626 386.3" stroke="#272a3c" stroke-width="3.05"/>
<path d="M588 386.1L626 392.1" stroke="#272a3c" stroke-width="3.05"/>
<path d="M588 391.9L626 398.0" stroke="#272a3c" stroke-width="3.05"/>
<path d="M588 397.8L626 403.8" stroke="#272a3c" stroke-width="3.05"/>
<path d="M588 403.6L626 409.6" stroke="#272a3c" stroke-width="3.05"/>
<path d="M588 409.4L626 415.4" stroke="#272a3c" stroke-width="3.05"/>
<path d="M588 415.3L626 421.3" stroke="#272a3c" stroke-width="3.05"/>
<path d="M588 421.1L626 427.1" stroke="#272a3c" stroke-width="3.05"/>
<path d="M588 426.9L626 432.9" stroke="#272a3c" stroke-width="3.05"/>
<path d="M588 432.7L626 438.8" stroke="#272a3c" stroke-width="3.05"/>
<rect x="591" y="310" width="32" height="125" fill="url(#shade)"/>
</g>
<g clip-path="url(#slR)"><rect x="718" y="310" width="40" height="125" fill="#e2dcd3"/>
<path d="M718 323.5L754 318.5" stroke="#272a3c" stroke-width="3.05"/>
<path d="M718 329.4L754 324.3" stroke="#272a3c" stroke-width="3.05"/>
<path d="M718 335.2L754 330.1" stroke="#272a3c" stroke-width="3.05"/>
<path d="M718 341.0L754 336.0" stroke="#272a3c" stroke-width="3.05"/>
<path d="M718 346.8L754 341.8" stroke="#272a3c" stroke-width="3.05"/>
<path d="M718 352.7L754 347.6" stroke="#272a3c" stroke-width="3.05"/>
<path d="M718 358.5L754 353.5" stroke="#272a3c" stroke-width="3.05"/>
<path d="M718 364.3L754 359.3" stroke="#272a3c" stroke-width="3.05"/>
<path d="M718 370.2L754 365.1" stroke="#272a3c" stroke-width="3.05"/>
<path d="M718 376.0L754 370.9" stroke="#272a3c" stroke-width="3.05"/>
<path d="M718 381.8L754 376.8" stroke="#272a3c" stroke-width="3.05"/>
<path d="M718 387.7L754 382.6" stroke="#272a3c" stroke-width="3.05"/>
<path d="M718 393.5L754 388.4" stroke="#272a3c" stroke-width="3.05"/>
<path d="M718 399.3L754 394.3" stroke="#272a3c" stroke-width="3.05"/>
<path d="M718 405.1L754 400.1" stroke="#272a3c" stroke-width="3.05"/>
<path d="M718 411.0L754 405.9" stroke="#272a3c" stroke-width="3.05"/>
<path d="M718 416.8L754 411.8" stroke="#272a3c" stroke-width="3.05"/>
<path d="M718 422.6L754 417.6" stroke="#272a3c" stroke-width="3.05"/>
<path d="M718 428.5L754 423.4" stroke="#272a3c" stroke-width="3.05"/>
<path d="M718 434.3L754 429.2" stroke="#272a3c" stroke-width="3.05"/>
<path d="M718 440.1L754 435.1" stroke="#272a3c" stroke-width="3.05"/>
<rect x="722" y="310" width="29" height="125" fill="url(#shade)"/>
</g>
<!-- collar -->
<path d="M641 281.5C650 292.5 690 293.5 700 277L697 274.5C688 287 652 287 645 278.5Z" fill="#ece6dc"/>
<!-- knot -->
<path d="M673 407L687 407L690 431L679 431L676 418Z" fill="#ded8ce"/>
<path d="M674 409L687 413M675 414L688 418M676.5 419L689 423M678 424L690 428M679 429L690 432" stroke="#272a3c" stroke-width="2.2"/>
<!-- hair (silhouette with face opening) -->
<path d="M666 172.5L676 174L684 178L691 184L697 191L702 199L707 208L711 218L715 228L719 238L723 248L727 258L731 267L734.5 275L736 280L733 283.5L724 285.5L712 284.5L703 281L700 279L693 272L688 262L686 255L688 245L689 232L688.5 218L686 207L680 200L672 196L662 197.5L652 198L645 203L641.5 212L640.5 225L641.5 240L643 250L647 258L648.5 266L648 276L644 284L643 296L634 304L622 306L612 303.5L605 298.5L603 292L605 286L608 278L612 268L615 256L617.5 243L620 230L623 218L627 207L631 198L636 190L641 183L648 177L655 173.5Z" fill="url(#hg)" fill-rule="evenodd" filter="url(#curl)"/>
<path d="M666 172.5L676 174L684 178L691 184L697 191L702 199L707 208L711 218L715 228L719 238L723 248L727 258L731 267L734.5 275L736 280L733 283.5L724 285.5L712 284.5L703 281L700 279L693 272L688 262L686 255L688 245L689 232L688.5 218L686 207L680 200L672 196L662 197.5L652 198L645 203L641.5 212L640.5 225L641.5 240L643 250L647 258L648.5 266L648 276L644 284L643 296L634 304L622 306L612 303.5L605 298.5L603 292L605 286L608 278L612 268L615 256L617.5 243L620 230L623 218L627 207L631 198L636 190L641 183L648 177L655 173.5Z" fill="#000" fill-rule="evenodd" filter="url(#tex)" opacity=".22"/>
<path d="M666 172.5L676 174L684 178L691 184L697 191L702 199L707 208L711 218L715 228L719 238L723 248L727 258L731 267L734.5 275L736 280L733 283.5L724 285.5L712 284.5L703 281L700 279L693 272L688 262L686 255L688 245L689 232L688.5 218L686 207L680 200L672 196L662 197.5L652 198L645 203L641.5 212L640.5 225L641.5 240L643 250L647 258L648.5 266L648 276L644 284L643 296L634 304L622 306L612 303.5L605 298.5L603 292L605 286L608 278L612 268L615 256L617.5 243L620 230L623 218L627 207L631 198L636 190L641 183L648 177L655 173.5Z" fill="#000" fill-rule="evenodd" filter="url(#texd)" opacity=".9"/>
<!-- earrings -->
<ellipse cx="643.8" cy="247" rx="2.6" ry="7.4" fill="none" stroke="#c99c9f" stroke-width="1" transform="rotate(-6 643.8 247)"/>
<ellipse cx="687.4" cy="248" rx="3" ry="6.8" fill="none" stroke="#d3a9aa" stroke-width="1" transform="rotate(10 687.4 248)"/>
</g>
</svg>
<!-- 28_compfooter.py -->
<div class="r" style="left:744px;top:158px;width:7.5px;height:7.5px;background:#a3cfcc;box-shadow:1px 1px 0 #1a1a1a;"></div>
<div class="r" style="left:984px;top:158px;width:7.5px;height:7.5px;background:#a3cfcc;box-shadow:1px 1px 0 #1a1a1a;"></div>
<div class="r" style="left:984px;top:293px;width:7.5px;height:7.5px;background:#a3cfcc;box-shadow:1px 1px 0 #1a1a1a;"></div>
<div class="r" style="left:984px;top:428px;width:7.5px;height:7.5px;background:#a3cfcc;box-shadow:1px 1px 0 #1a1a1a;"></div>
<div class="r" style="left:744px;top:428px;width:7.5px;height:7.5px;background:#a3cfcc;box-shadow:1px 1px 0 #1a1a1a;"></div>
<svg style="left:737px;top:286px" width="22" height="22" viewBox="0 0 22 22"><g fill="none" stroke="#3a3a3a" stroke-width="1" opacity=".7" transform="translate(.9 .9)"><circle cx="10.3" cy="10.6" r="4.6"/><path d="M10.3 2.2V6M10.3 15.2V19M1.9 10.6H5.7M14.9 10.6H18.7"/></g><g fill="none" stroke="#8fd0ca" stroke-width="1.1"><circle cx="10.3" cy="10.6" r="4.6" fill="rgba(255,255,255,.55)"/><path d="M10.3 2.2V6M10.3 15.2V19M1.9 10.6H5.7M14.9 10.6H18.7"/></g><circle cx="10.3" cy="10.6" r=".7" fill="#8fd0ca"/></svg>
<div class="r" style="left:300px;top:464px;width:827.5px;height:1px;background:#161616;"></div>
<div class="r" style="left:300px;top:466px;width:237px;height:18.5px;background:#1d1d1d;border:1px solid #303030;border-radius:2px;"></div>
<div class="r" style="left:542.3px;top:467.8px;width:1.5px;height:14.5px;background:#383838;"></div>
<div class="r" style="left:548.3px;top:466px;width:21.3px;height:19px;background:#191919;border-radius:3px;"></div>
<div class="r" style="left:570.6px;top:466px;width:20.6px;height:19px;background:#191919;border-radius:3px;border:1px solid #2d2d2d;"></div>
<div class="r" style="left:592.8px;top:466px;width:20.6px;height:19px;background:#191919;border-radius:3px;border:1px solid #2d2d2d;"></div>
<svg style="left:548px;top:465px" width="340" height="21" viewBox="0 0 340 21">
<!-- fast preview -->
<g fill="none" stroke="#c6c6c6" stroke-width="1.3"><path d="M12.6 15.1H4.5V4.7H17.3V12.6"/></g>
<path d="M12.2 6L8 11.2H10.6L9.2 15L14 9.6H11.2Z" fill="#c6c6c6"/><path d="M13.3 13.5H18L15.65 15.9Z" fill="#c6c6c6"/>
<!-- transparency grid -->
<rect x="26.8" y="5.6" width="12.6" height="9.6" fill="#123456" stroke="#2d8ceb" stroke-width="1.3"/>
<path d="M29.9 5.6h3.15v3.2H29.9zM36.2 5.6h3.15v3.2H36.2zM26.8 8.8h3.1v3.2h-3.1zM33.05 8.8h3.15v3.2h-3.15zM29.9 12h3.15v3.2H29.9zM36.2 12h3.15v3.2H36.2z" fill="#2578c8"/>
<!-- mask -->
<path d="M48.8 10.6L54 4.9H61.3V14.7H48.8Z" fill="none" stroke="#2d8ceb" stroke-width="1.3"/>
<path d="M47.7 9.5h2.2v2.2h-2.2zM52.9 3.8h2.2V6h-2.2zM60.2 3.8h2.2V6h-2.2zM60.2 13.6h2.2v2.2h-2.2zM47.7 13.6h2.2v2.2h-2.2zM60.2 8.8h2.2V11h-2.2z" fill="#2d8ceb"/>
<!-- region of interest -->
<rect x="70.9" y="4.9" width="12.4" height="10.4" fill="none" stroke="#c6c6c6" stroke-width="1.3"/><rect x="74.2" y="8" width="6.5" height="4.6" fill="#c6c6c6"/>
<!-- guides -->
<g fill="none" stroke="#c6c6c6" stroke-width="1.2"><path d="M92.7 5.1H104.9V12.6H92.7ZM98.8 2.8V6.3M98.8 11.4V14.6M90.8 8.85H94M103.6 8.85H106.8M97.3 8.85H100.3M98.8 7.4V10.3"/></g>
<path d="M100.4 15.2H105.9L103.15 18Z" fill="#c6c6c6"/>
<!-- separator -->
<rect x="114.2" y="2.8" width="1.5" height="14.5" fill="#383838"/>
<!-- rgb -->
<circle cx="130.7" cy="6.4" r="3" fill="#f2161c"/><circle cx="127.8" cy="10.8" r="3" fill="#1fc424"/><circle cx="133.6" cy="10.6" r="3" fill="#3c6cf5"/>
<path d="M132.7 15.2H137.7L135.2 18Z" fill="#c6c6c6"/>
<!-- aperture -->
<circle cx="153" cy="10" r="6.2" fill="#bcbcbc"/>
<path d="M154.97 10.35Q156.98 12.30 153.56 16.38M153.68 11.88Q153.00 14.60 147.76 13.67M151.71 11.53Q149.02 12.30 147.20 7.30M151.03 9.65Q149.02 7.70 152.44 3.62M152.32 8.12Q153.00 5.40 158.24 6.33M154.29 8.47Q156.98 7.70 158.80 12.70" fill="none" stroke="#232323" stroke-width=".9"/>
<circle cx="153" cy="10" r="2" fill="#232323"/>
<!-- separator -->
<rect x="202.3" y="2.8" width="1.5" height="14.5" fill="#383838"/>
<!-- camera -->
<path d="M211.9 6.4H215.4L216.4 4.8H221.3L222.3 6.4H226.1V15.7H211.9Z" fill="#c0c0c0"/><circle cx="219" cy="11" r="2.5" fill="#c0c0c0" stroke="#232323" stroke-width="1.1"/>
<!-- show snapshot (dim) -->
<g fill="#474747"><path d="M233.2 11.4C236.4 6.6 243.6 6.6 246.6 11.4C243.6 16 236.4 16 233.2 11.4Z"/><path d="M240.8 3.8H242.6L243.2 2.9H246L246.6 3.8H248.6V8.4H240.8Z" stroke="#232323" stroke-width=".8"/></g><circle cx="239.9" cy="11.3" r="2.2" fill="#2c2c2c"/><circle cx="244.7" cy="6.1" r="1.2" fill="#2a2a2a"/>
<rect x="255.5" y="2.8" width="1.5" height="14.5" fill="#383838"/>
<rect x="336.5" y="2.8" width="1.5" height="14.5" fill="#383838"/>
</svg>
<span class="t" style="left:714.00px;top:465.00px;height:20px;line-height:20px;font-size:11.5px;color:#2d8ceb;letter-spacing:-0.475px;">+0.0</span>
<div class="r" style="left:810.5px;top:466px;width:69px;height:18.5px;background:#1b1b1b;border:1px solid #313131;border-radius:2px;"></div>
<span class="t" style="left:819.50px;top:465.00px;height:20px;line-height:20px;font-size:11px;color:#a8a8a8;letter-spacing:-0.149px;">3:30:45:13</span>
<!-- 30_timeline.py -->
<div class="r" style="left:535.5px;top:553px;width:1.2px;height:148px;background:#161616;"></div>
<div class="r" style="left:544px;top:574px;width:781px;height:126.5px;background:#323232;"></div>
<div class="r" style="left:536.5px;top:590px;width:7.5px;height:110.5px;background:#262626;"></div>
<div class="r" style="left:531px;top:574px;width:801px;height:16.5px;background:#3c3c3c;"></div>
<div class="r" style="left:536px;top:523.5px;width:796px;height:10.5px;background:#111;"></div>
<div class="r" style="left:543px;top:524.5px;width:782px;height:8.5px;background:#686868;"></div>
<div class="r" style="left:536.5px;top:524.5px;width:6.5px;height:8.5px;background:#2d8ceb;border-radius:6px 0 0 6px;"></div>
<div class="r" style="left:1325px;top:524.5px;width:6.5px;height:8.5px;background:#2d8ceb;border-radius:0 6px 6px 0;"></div>
<div class="r" style="left:543.5px;top:525px;width:1px;height:8px;background:#4a78a8;"></div>
<div class="r" style="left:1325px;top:534px;width:7px;height:20px;background:#2a2a2a;"></div>
<div class="r" style="left:536.5px;top:534px;width:100px;height:15px;overflow:hidden">
<span class="t" style="left:-8.75px;top:-3.30px;height:20px;line-height:20px;font-size:11px;color:#a2a2a2;letter-spacing:-0.180px;">45:13f</span></div>
<div class="r" style="left:543.3px;top:548px;width:1.2px;height:5.5px;background:#8a8a8a;"></div>
<span class="t" style="left:666.25px;top:530.70px;height:20px;line-height:20px;font-size:11px;color:#a2a2a2;letter-spacing:-0.180px;">46:13f</span>
<div class="r" style="left:681.8px;top:548px;width:1.2px;height:5.5px;background:#8a8a8a;"></div>
<span class="t" style="left:804.75px;top:530.70px;height:20px;line-height:20px;font-size:11px;color:#a2a2a2;letter-spacing:-0.180px;">47:13f</span>
<div class="r" style="left:820.3px;top:548px;width:1.2px;height:5.5px;background:#8a8a8a;"></div>
<span class="t" style="left:943.25px;top:530.70px;height:20px;line-height:20px;font-size:11px;color:#a2a2a2;letter-spacing:-0.180px;">48:13f</span>
<div class="r" style="left:958.8px;top:548px;width:1.2px;height:5.5px;background:#8a8a8a;"></div>
<span class="t" style="left:1081.75px;top:530.70px;height:20px;line-height:20px;font-size:11px;color:#a2a2a2;letter-spacing:-0.180px;">49:13f</span>
<div class="r" style="left:1097.3px;top:548px;width:1.2px;height:5.5px;background:#8a8a8a;"></div>
<span class="t" style="left:1220.25px;top:530.70px;height:20px;line-height:20px;font-size:11px;color:#a2a2a2;letter-spacing:-0.180px;">50:13f</span>
<div class="r" style="left:1235.8px;top:548px;width:1.2px;height:5.5px;background:#8a8a8a;"></div>
<div class="r" style="left:536px;top:553.2px;width:796px;height:17px;background:#101010;"></div>
<div class="r" style="left:542.5px;top:554.2px;width:782.5px;height:14.9px;background:#616161;"></div>
<div class="r" style="left:537px;top:554.2px;width:5px;height:14.9px;background:#2d8ceb;border-radius:4.5px 0 0 4.5px;"></div>
<div class="r" style="left:1325.8px;top:554.2px;width:5.2px;height:14.9px;background:#2d8ceb;border-radius:0 4.5px 4.5px 0;"></div>
<div class="r" style="left:1325px;top:570px;width:7px;height:4px;background:#383838;"></div>
<div class="r" style="left:543px;top:570px;width:782px;height:3.1px;background:#1fc722;"></div>
<div class="r" style="left:543px;top:573.1px;width:782px;height:1.2px;background:#0c0c0c;"></div>
<div class="r" style="left:544px;top:574.2px;width:781px;height:15.8px;background:#0c0c0c;"></div>
<svg style="left:544px;top:574.2px" width="781" height="15.8" viewBox="0 0 781 15.8"><defs><linearGradient id="lb" x1="0" y1="0" x2="0" y2="1"><stop offset="0" stop-color="#bcd3cf"/><stop offset=".1" stop-color="#9dbfba"/><stop offset=".55" stop-color="#95b8b2"/><stop offset="1" stop-color="#88ada7"/></linearGradient><filter id="lbn" x="0" y="0" width="100%" height="100%"><feTurbulence type="fractalNoise" baseFrequency="0.8" numOctaves="2" seed="3" result="n"/><feColorMatrix in="n" type="matrix" values="0 0 0 0 1  0 0 0 0 1  0 0 0 0 1  0.55 0 0 0 -0.22" result="w"/><feComposite in="w" in2="SourceGraphic" operator="in" result="wn"/><feMerge><feMergeNode in="SourceGraphic"/><feMergeNode in="wn"/></feMerge></filter></defs><path d="M0 15.8V5.5Q0 0 5.5 0H775.5Q781 0 781 5.5V15.8Z" fill="url(#lb)" filter="url(#lbn)"/></svg>
<div class="r" style="left:537px;top:590px;width:795px;height:0.8px;background:#2a2a2a;"></div>
<div class="r" style="left:1332px;top:534px;width:1px;height:56px;background:#161616;"></div>
<div class="r" style="left:1332px;top:573px;width:18px;height:1px;background:#0c0c0c;"></div>
<svg style="left:1333px;top:555px" width="16" height="36" viewBox="0 0 16 36">
<path d="M3 1.2H14V10.8L8.5 15.2L3 10.8Z" fill="#b8b8b8"/>
<path d="M7.5 23.2H14.2V30H9" fill="#b8b8b8"/><path d="M1 28.8L6.5 22L7.2 28.8Z" fill="none" stroke="#b8b8b8" stroke-width="1.2"/><circle cx="6.6" cy="31.3" r="2.7" fill="#232323" stroke="#c8c8c8" stroke-width="1.2"/></svg>
<div class="r" style="left:543px;top:548px;width:1.2px;height:153px;background:#2d8ceb;"></div>
<svg style="left:536px;top:538px" width="16" height="16" viewBox="0 0 16 16"><path d="M.6 1H13.6V5.6L7.3 14.6L.6 5.6Z" fill="#2d8ceb"/><path d="M5.8 5.6H9.4M7.6 5.6V13" stroke="#16324f" stroke-width="1"/></svg>
<div class="r" style="left:531px;top:700.5px;width:112px;height:1.2px;background:#0d0d0d;"></div>
<svg style="left:540px;top:702.4px" width="100" height="14" viewBox="0 0 100 14">
<path d="M1 8.6L4.2 5.2L5.6 6.8L8 3.4L11.5 8.6Z" fill="#b4b4b4"/>
<path d="M31.5 7.5H70" stroke="#4a4a4a" stroke-width="1.3"/>
<circle cx="27" cy="8" r="4.1" fill="#232323" stroke="#b4b4b4" stroke-width="1.7"/>
<path d="M82 10.6L86.3 5L88.3 5L84.4 10.6ZM86 10.6L91.5 3L98 10.6Z" fill="#b4b4b4"/></svg>
<svg style="left:4px;top:706px" width="40" height="12" viewBox="0 0 40 12"><g fill="none" stroke="#2d8ceb" stroke-width="1.2"><rect x="6.5" y="1" width="6" height="6"/><rect x="9.5" y="4" width="7" height="7" fill="#232323"/><path d="M11.5 7.5h3M13 6v3"/></g></svg>
<svg style="left:28px;top:706px" width="60" height="12" viewBox="0 0 60 12"><g fill="none" stroke="#bdbdbd" stroke-width="1.2"><circle cx="5" cy="5" r="3"/><rect x="4.5" y="3.5" width="7" height="7" fill="#232323"/></g><path d="M20 5L25 .5L30 5H28V11H22V5Z" fill="#bdbdbd"/><path d="M38 1H48V6H50.5V1.5H49M40 6.5H46L47 10.5H39Z" fill="#bdbdbd" stroke="#bdbdbd" stroke-width=".8"/></svg>
<span class="t" style="left:108.00px;top:700.20px;height:20px;line-height:20px;font-size:11px;color:#a8a8a8;letter-spacing:-0.048px;">Frame Render Time:</span>
<span class="t" style="left:214.00px;top:700.20px;height:20px;line-height:20px;font-size:11px;color:#3fd6a4;letter-spacing:-0.260px;">1ms</span>
<div class="r" style="left:268px;top:701px;width:132px;height:15.5px;background:#1c1c1c;border:1px solid #3a3a3a;border-radius:2px;"></div>
<span class="t" style="left:273.00px;top:700.20px;height:20px;line-height:20px;font-size:11px;color:#a8a8a8;letter-spacing:0.058px;">Toggle Switches / Modes</span>
<div class="r" style="left:0px;top:718px;width:1350px;height:2px;background:#161616;"></div>
<!-- 40_right.py -->
<span class="t" style="left:1145.30px;top:82.00px;height:20px;line-height:20px;font-size:11px;color:#a4a4a4;letter-spacing:-0.086px;">Info</span>
<span class="t" style="left:1145.30px;top:112.00px;height:20px;line-height:20px;font-size:11px;color:#a4a4a4;letter-spacing:-0.027px;">Audio</span>
<span class="t" style="left:1145.30px;top:142.00px;height:20px;line-height:20px;font-size:11px;color:#a4a4a4;letter-spacing:0.197px;">Preview</span>
<span class="t" style="left:1145.30px;top:172.00px;height:20px;line-height:20px;font-size:11px;color:#c4c4c4;letter-spacing:-0.068px;">Effects &amp; Presets</span>
<div class="r" style="left:1133px;top:105px;width:204px;height:2px;background:#1a1a1a;"></div>
<div class="r" style="left:1133px;top:135px;width:204px;height:2px;background:#1a1a1a;"></div>
<div class="r" style="left:1133px;top:165px;width:204px;height:2px;background:#1a1a1a;"></div>
<svg style="left:1318px;top:178px" width="10" height="9" viewBox="0 0 10 9"><path d="M0 1H9M0 4.4H9M0 7.8H9" stroke="#c0c0c0" stroke-width="1.2"/></svg>
<div class="r" style="left:1137.5px;top:198.5px;width:195px;height:18.5px;background:#161616;border:1px solid #2c2c2c;border-radius:3px;"></div>
<svg style="left:1143px;top:201px" width="20" height="13" viewBox="0 0 20 13"><circle cx="8.6" cy="5" r="3.7" fill="none" stroke="#2d8ceb" stroke-width="1.4"/><path d="M6 7.8L1.5 11.5" stroke="#2d8ceb" stroke-width="1.6"/><path d="M12.3 7.6H17.5L14.9 10.2Z" fill="#2d8ceb"/></svg>
<span class="t" style="left:1166.00px;top:198.00px;height:20px;line-height:20px;font-size:11px;color:#c8c8c8;letter-spacing:-0.128px;">Luma</span>
<svg style="left:1320px;top:204px" width="9" height="9" viewBox="0 0 9 9"><path d="M.8 .8L8 8M8 .8L.8 8" stroke="#d0d0d0" stroke-width="1.6"/></svg>
<div class="r" style="left:1133px;top:219.5px;width:204px;height:1.5px;background:#1a1a1a;"></div>
<svg style="left:1139px;top:226px" width="9" height="6" viewBox="0 0 9 6"><path d="M.7 .8L4.3 4.6L7.9 .8" fill="none" stroke="#b0b0b0" stroke-width="1.2"/></svg>
<span class="t" style="left:1149.30px;top:219.00px;height:20px;line-height:20px;font-size:11px;color:#b4b4b4;letter-spacing:-0.066px;">Obsolete</span>
<div class="r" style="left:1133px;top:238px;width:204px;height:16.5px;background:#3b3b3b;"></div>
<svg style="left:1166px;top:239px" width="14" height="14" viewBox="0 0 14 14"><path d="M1 3.2H13V13H1Z" fill="#d2d2d2"/><path d="M3 .8H5.2V3.2H3ZM8.8 .8H11V3.2H8.8Z" fill="#d2d2d2"/></svg>
<span class="t" style="left:1167.80px;top:237.30px;height:20px;line-height:20px;font-size:8.5px;color:#2a2a2a;letter-spacing:-0.600px;font-weight:bold;">16</span>
<div class="r" style="left:1183px;top:239.5px;width:60px;height:13.5px;background:#a6a6a6;"></div>
<span class="t" style="left:1186.30px;top:236.30px;height:20px;line-height:20px;font-size:11px;color:#1e1e1e;letter-spacing:-0.066px;">Luma Key</span>
<div class="r" style="left:1133px;top:254.5px;width:204px;height:1.2px;background:#141414;"></div>
<div class="r" style="left:1336.3px;top:254.5px;width:1.2px;height:17px;background:#141414;"></div>
<svg style="left:1317px;top:257px" width="14" height="14" viewBox="0 0 14 14"><path d="M2 1H13V13H6.5V8H2Z" fill="#c8c8c8"/><path d="M1 8.8H5.5V13Z" fill="#c8c8c8"/></svg>
<div class="r" style="left:1133px;top:275px;width:204px;height:2px;background:#1a1a1a;"></div>
<span class="t" style="left:1145.30px;top:281.00px;height:20px;line-height:20px;font-size:11px;color:#a4a4a4;letter-spacing:-0.020px;">Libraries</span>
<div class="r" style="left:1133px;top:304px;width:204px;height:2px;background:#1a1a1a;"></div>
<span class="t" style="left:1145.30px;top:311.00px;height:20px;line-height:20px;font-size:11px;color:#a4a4a4;letter-spacing:-0.033px;">Character</span>
<div class="r" style="left:1133px;top:334px;width:204px;height:2px;background:#1a1a1a;"></div>
<span class="t" style="left:1145.30px;top:341.00px;height:20px;line-height:20px;font-size:11px;color:#a4a4a4;letter-spacing:-0.041px;">Paragraph</span>
<div class="r" style="left:1133px;top:364px;width:204px;height:2px;background:#1a1a1a;"></div>
<span class="t" style="left:1145.30px;top:371.00px;height:20px;line-height:20px;font-size:11px;color:#a4a4a4;letter-spacing:0.018px;">Tracker</span>
<div class="r" style="left:1133px;top:394px;width:204px;height:2px;background:#1a1a1a;"></div>
<span class="t" style="left:1145.30px;top:401.00px;height:20px;line-height:20px;font-size:11px;color:#a4a4a4;letter-spacing:0.152px;">Content-Aware Fill</span>
<div class="r" style="left:1133px;top:424px;width:204px;height:2px;background:#1a1a1a;"></div>
<!-- 50_title.py -->
<div class="r" style="left:0px;top:0px;width:1350px;height:51px;background:#fff;"></div>
<div class="r" style="left:0px;top:0px;width:1350px;height:1px;background:#1f2626;"></div>
<div class="r" style="left:0px;top:1px;width:1px;height:719px;background:#1f2020;"></div>
<div class="r" style="left:9.2px;top:7px;width:15.8px;height:15px;background:#00005b;border-radius:3px;"></div>
<span class="t" style="left:11.30px;top:5.00px;height:20px;line-height:20px;font-size:9.5px;color:#9999ff;letter-spacing:-0.400px;font-weight:bold;">Ae</span>
<span class="t" style="left:30.00px;top:5.50px;height:20px;line-height:20px;font-size:12px;color:#000;letter-spacing:-0.080px;">Adobe After Effects 2023 - Untitled Project.aep *</span>
<svg style="left:1228px;top:5px" width="110" height="20" viewBox="0 0 110 20"><g fill="none" stroke="#000" stroke-width="1.1"><path d="M4.5 10.5H14.5"/><rect x="49.5" y="5.5" width="9" height="9"/><path d="M95 5L105 15M105 5L95 15"/></g></svg>
<div class="r" style="left:1px;top:31px;width:32px;height:19.5px;background:#cce8ff;border:1px solid #99d1ff;"></div>
<span class="t" style="left:8.00px;top:31.00px;height:20px;line-height:20px;font-size:12px;color:#000;letter-spacing:-0.209px;">File</span>
<span class="t" style="left:40.00px;top:31.00px;height:20px;line-height:20px;font-size:12px;color:#000;letter-spacing:-0.044px;">Edit</span>
<span class="t" style="left:74.00px;top:31.00px;height:20px;line-height:20px;font-size:12px;color:#000;letter-spacing:0.255px;">Composition</span>
<span class="t" style="left:157.00px;top:31.00px;height:20px;line-height:20px;font-size:12px;color:#000;letter-spacing:-0.303px;">Layer</span>
<span class="t" style="left:199.00px;top:31.00px;height:20px;line-height:20px;font-size:12px;color:#000;letter-spacing:0.006px;">Effect</span>
<span class="t" style="left:243.00px;top:31.00px;height:20px;line-height:20px;font-size:12px;color:#000;letter-spacing:0.293px;">Animation</span>
<span class="t" style="left:313.00px;top:31.00px;height:20px;line-height:20px;font-size:12px;color:#000;letter-spacing:0.052px;">View</span>
<span class="t" style="left:352.00px;top:31.00px;height:20px;line-height:20px;font-size:12px;color:#000;letter-spacing:0.220px;">Window</span>
<span class="t" style="left:410.00px;top:31.00px;height:20px;line-height:20px;font-size:12px;color:#000;letter-spacing:0.080px;">Help</span>
<!-- 60_menus.py -->
<div class="r" style="left:1px;top:50px;width:530px;height:656.5px;background:#f0f0f0;border:1px solid #a8a8a8;box-shadow:2px 2px 4px rgba(0,0,0,.38);"></div>
<div class="r" style="left:295px;top:53px;width:1px;height:650px;background:#a0a0a0;"></div>
<span class="t" style="left:23.00px;top:51.50px;height:20px;line-height:20px;font-size:12px;color:#000;letter-spacing:-0.160px;">New</span>
<svg style="left:283px;top:58px" width="5" height="8" viewBox="0 0 5 8"><path d="M.5 .3L4.4 4L.5 7.7Z" fill="#000"/></svg>
<span class="t" style="left:23.00px;top:70.50px;height:20px;line-height:20px;font-size:12px;color:#000;letter-spacing:-0.149px;">Open Project...</span>
<span class="t" style="left:181.00px;top:70.50px;height:20px;line-height:20px;font-size:12px;color:#000;letter-spacing:0.099px;">Ctrl+O</span>
<span class="t" style="left:23.00px;top:89.50px;height:20px;line-height:20px;font-size:12px;color:#000;letter-spacing:-0.135px;">Open Team Project...</span>
<span class="t" style="left:23.00px;top:108.50px;height:20px;line-height:20px;font-size:12px;color:#969696;letter-spacing:-0.228px;">Open Recent</span>
<svg style="left:283px;top:115px" width="5" height="8" viewBox="0 0 5 8"><path d="M.5 .3L4.4 4L.5 7.7Z" fill="#8a8a8a"/></svg>
<span class="t" style="left:23.00px;top:127.50px;height:20px;line-height:20px;font-size:12px;color:#000;letter-spacing:-0.195px;">Browse in Bridge...</span>
<span class="t" style="left:181.00px;top:127.50px;height:20px;line-height:20px;font-size:12px;color:#000;letter-spacing:0.248px;">Ctrl+Alt+Shift+O</span>
<div class="r" style="left:5px;top:151px;width:287px;height:1px;background:#a0a0a0;"></div>
<span class="t" style="left:23.00px;top:155.50px;height:20px;line-height:20px;font-size:12px;color:#000;letter-spacing:-0.336px;">Close</span>
<span class="t" style="left:181.00px;top:155.50px;height:20px;line-height:20px;font-size:12px;color:#000;letter-spacing:0.134px;">Ctrl+W</span>
<span class="t" style="left:23.00px;top:174.50px;height:20px;line-height:20px;font-size:12px;color:#000;letter-spacing:-0.181px;">Close Project</span>
<span class="t" style="left:23.00px;top:193.50px;height:20px;line-height:20px;font-size:12px;color:#000;letter-spacing:-0.838px;">Save</span>
<span class="t" style="left:181.00px;top:193.50px;height:20px;line-height:20px;font-size:12px;color:#000;letter-spacing:-0.112px;">Ctrl+S</span>
<span class="t" style="left:23.00px;top:212.50px;height:20px;line-height:20px;font-size:12px;color:#000;letter-spacing:-0.575px;">Save As</span>
<svg style="left:283px;top:219px" width="5" height="8" viewBox="0 0 5 8"><path d="M.5 .3L4.4 4L.5 7.7Z" fill="#000"/></svg>
<span class="t" style="left:23.00px;top:231.50px;height:20px;line-height:20px;font-size:12px;color:#000;letter-spacing:-0.188px;">Increment and Save</span>
<span class="t" style="left:181.00px;top:231.50px;height:20px;line-height:20px;font-size:12px;color:#000;letter-spacing:0.143px;">Ctrl+Alt+Shift+S</span>
<span class="t" style="left:23.00px;top:250.50px;height:20px;line-height:20px;font-size:12px;color:#969696;letter-spacing:-0.390px;">Revert</span>
<div class="r" style="left:5px;top:274px;width:287px;height:1px;background:#a0a0a0;"></div>
<span class="t" style="left:23.00px;top:278.50px;height:20px;line-height:20px;font-size:12px;color:#000;letter-spacing:0.332px;">Import</span>
<svg style="left:283px;top:285px" width="5" height="8" viewBox="0 0 5 8"><path d="M.5 .3L4.4 4L.5 7.7Z" fill="#000"/></svg>
<span class="t" style="left:23.00px;top:297.50px;height:20px;line-height:20px;font-size:12px;color:#000;letter-spacing:-0.160px;">Import Recent Footage</span>
<svg style="left:283px;top:304px" width="5" height="8" viewBox="0 0 5 8"><path d="M.5 .3L4.4 4L.5 7.7Z" fill="#000"/></svg>
<div class="r" style="left:3px;top:317.7px;width:288px;height:19.3px;background:#0078d7;"></div>
<span class="t" style="left:23.00px;top:316.50px;height:20px;line-height:20px;font-size:12px;color:#fff;letter-spacing:-0.113px;">Export</span>
<svg style="left:283px;top:323px" width="5" height="8" viewBox="0 0 5 8"><path d="M.5 .3L4.4 4L.5 7.7Z" fill="#fff"/></svg>
<div class="r" style="left:5px;top:340px;width:287px;height:1px;background:#a0a0a0;"></div>
<span class="t" style="left:23.00px;top:344.50px;height:20px;line-height:20px;font-size:12px;color:#000;letter-spacing:0.026px;">Add Fonts from Adobe...</span>
<div class="r" style="left:5px;top:368px;width:287px;height:1px;background:#a0a0a0;"></div>
<span class="t" style="left:23.00px;top:372.50px;height:20px;line-height:20px;font-size:12px;color:#969696;letter-spacing:-0.058px;">Adobe Dynamic Link</span>
<svg style="left:283px;top:379px" width="5" height="8" viewBox="0 0 5 8"><path d="M.5 .3L4.4 4L.5 7.7Z" fill="#8a8a8a"/></svg>
<div class="r" style="left:5px;top:396px;width:287px;height:1px;background:#a0a0a0;"></div>
<span class="t" style="left:23.00px;top:400.50px;height:20px;line-height:20px;font-size:12px;color:#000;letter-spacing:-0.335px;">Find</span>
<span class="t" style="left:181.00px;top:400.50px;height:20px;line-height:20px;font-size:12px;color:#000;letter-spacing:0.000px;">Ctrl+F</span>
<div class="r" style="left:5px;top:424px;width:287px;height:1px;background:#a0a0a0;"></div>
<span class="t" style="left:23.00px;top:428.50px;height:20px;line-height:20px;font-size:12px;color:#969696;letter-spacing:0.000px;">Add Footage to Comp</span>
<span class="t" style="left:181.00px;top:428.50px;height:20px;line-height:20px;font-size:12px;color:#969696;letter-spacing:0.366px;">Ctrl+/</span>
<span class="t" style="left:23.00px;top:447.50px;height:20px;line-height:20px;font-size:12px;color:#969696;letter-spacing:-0.030px;">New Comp from Selection...</span>
<span class="t" style="left:181.00px;top:447.50px;height:20px;line-height:20px;font-size:12px;color:#969696;letter-spacing:0.711px;">Alt+\</span>
<div class="r" style="left:5px;top:471px;width:287px;height:1px;background:#a0a0a0;"></div>
<span class="t" style="left:23.00px;top:475.50px;height:20px;line-height:20px;font-size:12px;color:#000;letter-spacing:-0.235px;">Dependencies</span>
<svg style="left:283px;top:482px" width="5" height="8" viewBox="0 0 5 8"><path d="M.5 .3L4.4 4L.5 7.7Z" fill="#000"/></svg>
<span class="t" style="left:23.00px;top:494.50px;height:20px;line-height:20px;font-size:12px;color:#000;letter-spacing:-0.096px;">Watch Folder...</span>
<div class="r" style="left:5px;top:518px;width:287px;height:1px;background:#a0a0a0;"></div>
<span class="t" style="left:23.00px;top:522.50px;height:20px;line-height:20px;font-size:12px;color:#000;letter-spacing:-0.268px;">Scripts</span>
<svg style="left:283px;top:529px" width="5" height="8" viewBox="0 0 5 8"><path d="M.5 .3L4.4 4L.5 7.7Z" fill="#000"/></svg>
<div class="r" style="left:5px;top:546px;width:287px;height:1px;background:#a0a0a0;"></div>
<span class="t" style="left:23.00px;top:550.50px;height:20px;line-height:20px;font-size:12px;color:#000;letter-spacing:-0.235px;">Create Proxy</span>
<svg style="left:283px;top:557px" width="5" height="8" viewBox="0 0 5 8"><path d="M.5 .3L4.4 4L.5 7.7Z" fill="#000"/></svg>
<span class="t" style="left:23.00px;top:569.50px;height:20px;line-height:20px;font-size:12px;color:#969696;letter-spacing:-0.335px;">Set Proxy</span>
<svg style="left:283px;top:576px" width="5" height="8" viewBox="0 0 5 8"><path d="M.5 .3L4.4 4L.5 7.7Z" fill="#8a8a8a"/></svg>
<span class="t" style="left:23.00px;top:588.50px;height:20px;line-height:20px;font-size:12px;color:#969696;letter-spacing:-0.073px;">Interpret Footage</span>
<svg style="left:283px;top:595px" width="5" height="8" viewBox="0 0 5 8"><path d="M.5 .3L4.4 4L.5 7.7Z" fill="#8a8a8a"/></svg>
<span class="t" style="left:23.00px;top:607.50px;height:20px;line-height:20px;font-size:12px;color:#969696;letter-spacing:-0.306px;">Replace Footage</span>
<svg style="left:283px;top:614px" width="5" height="8" viewBox="0 0 5 8"><path d="M.5 .3L4.4 4L.5 7.7Z" fill="#8a8a8a"/></svg>
<span class="t" style="left:23.00px;top:626.50px;height:20px;line-height:20px;font-size:12px;color:#969696;letter-spacing:-0.285px;">Reload Footage</span>
<span class="t" style="left:181.00px;top:626.50px;height:20px;line-height:20px;font-size:12px;color:#969696;letter-spacing:0.204px;">Ctrl+Alt+L</span>
<span class="t" style="left:23.00px;top:645.50px;height:20px;line-height:20px;font-size:12px;color:#969696;letter-spacing:-0.366px;">License...</span>
<span class="t" style="left:23.00px;top:664.50px;height:20px;line-height:20px;font-size:12px;color:#000;letter-spacing:-0.258px;">Reveal in Explorer</span>
<span class="t" style="left:23.00px;top:683.50px;height:20px;line-height:20px;font-size:12px;color:#969696;letter-spacing:-0.272px;">Reveal in Bridge</span>
<div class="r" style="left:299px;top:56px;width:228px;height:1px;background:#a0a0a0;"></div>
<span class="t" style="left:317.30px;top:60.50px;height:20px;line-height:20px;font-size:12px;color:#000;letter-spacing:-0.160px;">Project Settings...</span>
<span class="t" style="left:417.30px;top:60.50px;height:20px;line-height:20px;font-size:12px;color:#000;letter-spacing:0.206px;">Ctrl+Alt+Shift+K</span>
<div class="r" style="left:299px;top:84.5px;width:228px;height:1px;background:#a0a0a0;"></div>
<span class="t" style="left:317.30px;top:88.50px;height:20px;line-height:20px;font-size:12px;color:#000;letter-spacing:-0.160px;">Exit</span>
<span class="t" style="left:417.30px;top:88.50px;height:20px;line-height:20px;font-size:12px;color:#000;letter-spacing:0.220px;">Ctrl+Q</span>
<div class="r" style="left:292px;top:314.7px;width:292px;height:93.3px;background:#f0f0f0;border:1px solid #a8a8a8;box-shadow:2px 2px 4px rgba(0,0,0,.38);"></div>
<div class="r" style="left:294px;top:340px;width:287.5px;height:21.5px;background:#91c9f7;"></div>
<span class="t" style="left:326.30px;top:319.60px;height:20px;line-height:20px;font-size:12px;color:#000;letter-spacing:-0.033px;">Add to Adobe Media Encoder Queue...</span>
<span class="t" style="left:326.30px;top:341.45px;height:20px;line-height:20px;font-size:12px;color:#000;letter-spacing:-0.160px;">Add to Render Queue</span>
<span class="t" style="left:326.30px;top:363.30px;height:20px;line-height:20px;font-size:12px;color:#000;letter-spacing:-0.126px;">Export Adobe Premiere Pro Project...</span>
<span class="t" style="left:326.30px;top:385.15px;height:20px;line-height:20px;font-size:12px;color:#000;letter-spacing:-0.148px;">Maxon Cinema 4D Exporter...</span>
<!-- 70_annot.py -->
<svg style="left:0;top:0" width="1350" height="720" viewBox="0 0 1350 720">
<rect x="5.7" y="310.3" width="280.3" height="31.8" rx="1.2" fill="none" stroke="#fa0505" stroke-width="6"/>
<rect x="298.2" y="331.9" width="286.9" height="46.3" rx="1.2" fill="none" stroke="#fa0505" stroke-width="5.8"/>
<path d="M32.4 47.4L51.2 51.5Q53.6 53 52.4 54.5Q51.6 55.7 46.8 55.4Q96.5 100.5 139 147L138.4 147.7L41.7 61.8L41.2 66Q39.6 68.2 37.8 66.7L36.5 65Z" fill="#f80808" stroke="#f80808" stroke-width=".5" stroke-linejoin="round"/>
<path d="M453.4 351.3V367.2L457.2 363.9L459.9 369.7L462.5 368.6L459.9 363H464.7Z" fill="#fff" stroke="#000" stroke-width="1" stroke-linejoin="miter"/>
</svg>
</body></html>
